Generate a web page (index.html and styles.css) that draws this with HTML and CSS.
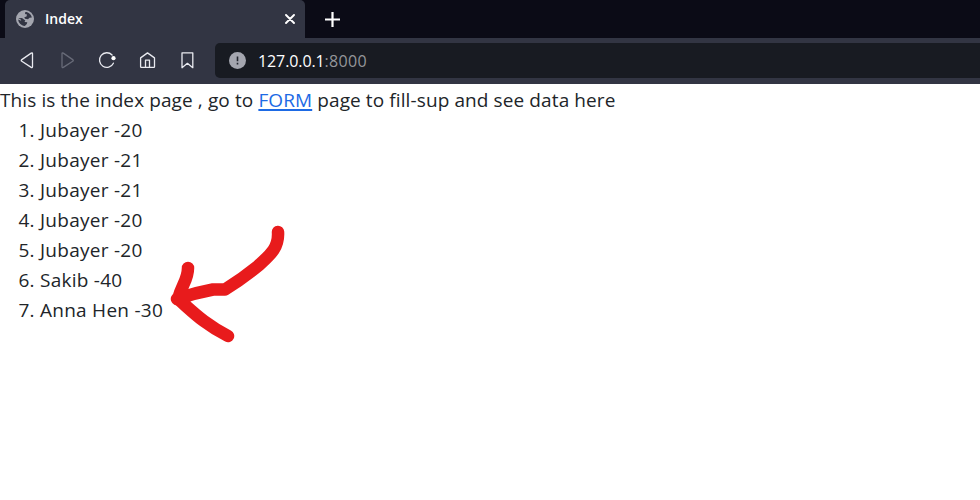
FILE: index.html
```html
<!DOCTYPE html>
<html lang="en">
<head>
<meta charset="utf-8">
<title>Index</title>
<link rel="stylesheet" href="styles.css">
</head>
<body>
<header class="browser">
  <div class="tabs">
    <div class="tab">
      <svg class="globe" viewBox="0 0 18 18"><circle cx="9" cy="9" r="9" fill="#a4a6af"/><path d="M9.300 2C12 1.700 15.500 4.500 15.800 7.500L13.500 7.800 12 9.200 9 8.700 8.300 7.200 10.500 6.500 11 4.500 9 4zM2.200 8.200L6 8 9.300 10.500 8.500 12 11.300 12.300 10.800 14 8.800 15.900C5 15.500 2.300 12.500 2.200 9.500L5.200 10.800 4.800 9.500z" fill="#323543"/></svg>
      <span class="title">Index</span>
      <svg class="close" viewBox="0 0 10 10"><path d="M1 1l8 8M9 1L1 9" stroke="#fff" stroke-width="1.9" stroke-linecap="round"/></svg>
    </div>
    <svg class="plus" viewBox="0 0 15 15"><path d="M7.5 0v15M0 7.5h15" stroke="#fff" stroke-width="2.2"/></svg>
  </div>
  <nav class="toolbar">
    <svg class="icon" viewBox="0 0 20 20"><path d="M14.500 2.600v13q0 1.500-1.300.8L3.800 10.200q-1.200-.8 0-1.600l9.400-6.500q1.300-.7 1.300.5z"/></svg>
    <svg class="icon dim" viewBox="0 0 20 20"><path d="M4 2.600v13q0 1.500 1.300.8l9.400-6.200q1.200-.8 0-1.600L5.300 2.100Q4 1.400 4 2.600z"/></svg>
    <svg class="icon" viewBox="0 0 20 20"><path d="M14.100 4A7.300 7.300 0 1 0 15.400 12.200"/><circle class="dot" cx="15.500" cy="7.200" r="2.100"/></svg>
    <svg class="icon" viewBox="0 0 20 20"><path d="M2.600 15.800V6.900L9.500 1.900l7 5v8.900q0 .6-.6.6H3.200q-.6 0-.6-.6zM7.500 16.400V9.200h4v7.200"/></svg>
    <svg class="icon" viewBox="0 0 20 20"><path d="M4 1.800h10.800v14.900L9.400 12.300 4 16.700z"/></svg>
    <div class="address">
      <svg class="info" viewBox="0 0 17 17"><circle cx="8.5" cy="8.5" r="8.5" fill="#a4a6af"/><path d="M8.5 4.500v4.700M8.500 10.800v1.700" stroke="#22252e" stroke-width="1.600"/></svg>
      <span class="url">127.0.0.1<span class="port">:8000</span></span>
    </div>
  </nav>
</header>
<main>
  <p class="intro">This is the index page , go to <a href="#">FORM</a> page to fill-sup and see data here</p>
  <ol>
    <li>Jubayer -20</li>
    <li>Jubayer -21</li>
    <li>Jubayer -21</li>
    <li>Jubayer -20</li>
    <li>Jubayer -20</li>
    <li>Sakib -40</li>
    <li>Anna Hen -30</li>
  </ol>
  <svg class="arrow" viewBox="160 216 140 136"><path d="M278 232C279 248 270 255 258 266Q242 279 225 289.500H213Q194 293 177 299M188 268C188 280 182 284 178 299C192 311 204 324 228 336"/></svg>
</main>
</body>
</html>
```
FILE: styles.css
```css
* { box-sizing: border-box; }
body { margin: 0; background: #fff; color: #212529; font-family: "Open Sans", "Noto Sans", sans-serif; }
.browser { height: 84px; background: #323543; }
.tabs { height: 38px; display: flex; align-items: center; background: #0b0b16; padding-left: 5px; }
.tab { width: 300px; height: 38px; display: flex; align-items: center; padding: 0 10px 0 11px; background: #323543; border-radius: 5px 5px 0 0; }
.globe { width: 18px; height: 18px; }
.title { margin-left: 11px; color: #fff; font-size: 14px; font-weight: 600; line-height: 20px; }
.close { width: 10px; height: 10px; margin-left: auto; }
.plus { width: 15px; height: 15px; margin-left: 20px; }
.toolbar { height: 46px; display: flex; align-items: center; gap: 20px; padding-left: 18px; }
.icon { width: 20px; height: 20px; flex: none; fill: none; stroke: #e9eaf0; stroke-width: 1.3; stroke-linejoin: round; stroke-linecap: round; }
.dim { stroke: #686b78; }
.dot { fill: #fff; stroke: none; }
.address { flex: 1; height: 35px; margin: 0 0 1px -3px; display: flex; align-items: center; padding-left: 14px; background: #181b22; border-radius: 5px 0 0 5px; }
.info { width: 17px; height: 17px; }
.url { margin-left: 12px; color: #fff; font-size: 16px; line-height: 24px; letter-spacing: -0.1px; }
.port { color: #94969a; letter-spacing: 0.3px; }
main { position: relative; height: 416px; font-size: 19px; line-height: 30px; letter-spacing: 0.105px; }
.intro { margin: 0; padding-top: 1px; white-space: nowrap; }
a { color: #1d6ae5; text-decoration-thickness: 2px; text-underline-offset: 2px; }
ol { margin: 0; padding-left: 40px; }
li { letter-spacing: 0.26px; }
.arrow { position: absolute; left: 160px; top: 132px; width: 140px; height: 136px; fill: none; stroke: #e81b1c; stroke-width: 12.5; stroke-linecap: round; stroke-linejoin: round; }
```
